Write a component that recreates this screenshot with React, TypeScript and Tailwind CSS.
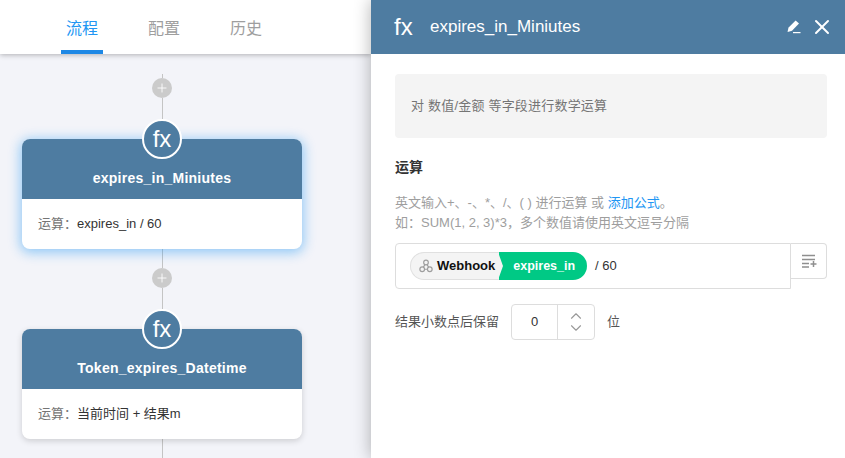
import { ChevronDown, ChevronUp, Plus, X } from "lucide-react";

const fontStack = "font-['Liberation_Sans','Noto_Sans_CJK_SC',sans-serif]";

function Connector({ height }: { height: string }) {
  return <div className={`w-px bg-[#c4c4c4] ${height}`} />;
}

function AddButton() {
  return (
    <div className="flex w-5 h-5 items-center justify-center rounded-full bg-[#cbcbcb] text-white">
      <Plus size={14} strokeWidth={1.5} />
    </div>
  );
}

function FlowCard({ title, children, active }: { title: string; children: React.ReactNode; active?: boolean }) {
  return (
    <div className="relative w-[280px]">
      <div className="absolute left-1/2 -top-5 z-10 flex w-10 h-10 -translate-x-1/2 items-center justify-center rounded-full border-2 border-white bg-[#4e7ca1] text-[24px] text-white">
        fx
      </div>
      <div
        className={`overflow-hidden rounded-lg bg-white ${
          active ? "shadow-[0_2px_12px_2px_rgba(33,150,243,0.45)]" : "shadow-[0_2px_6px_rgba(0,0,0,0.16)]"
        }`}
      >
        <div className="flex h-[60px] items-end justify-center bg-[#4e7ca1] pb-[10px] text-[14px] font-bold tracking-[0.25px] text-white">
          {title}
        </div>
        <div className="flex h-[50px] items-center px-4 text-[13px] text-[#333]">{children}</div>
      </div>
    </div>
  );
}

function FlowPane() {
  return (
    <div className="flex w-[371px] shrink-0 flex-col bg-[#f3f4f9]">
      <div className="z-10 flex h-[54px] shrink-0 gap-10 bg-white pl-[61px] shadow-[0_1px_5px_rgba(0,0,0,0.28)]">
        <div className="flex h-full w-[42px] items-center justify-center border-b-4 border-[#1e88e5] pt-2 text-[16px] text-[#2196f3]">
          流程
        </div>
        <div className="flex h-full w-[42px] items-center justify-center pt-1 text-[16px] text-[#9e9e9e]">配置</div>
        <div className="flex h-full w-[42px] items-center justify-center pt-1 text-[16px] text-[#9e9e9e]">历史</div>
      </div>
      <div className="flex w-[324px] flex-col items-center pt-5">
        <Connector height="h-1" />
        <AddButton />
        <Connector height="h-[41px]" />
        <FlowCard title="expires_in_Miniutes" active>
          <span className="text-[#757575]">运算：</span>
          expires_in / 60
        </FlowCard>
        <Connector height="h-[19px]" />
        <AddButton />
        <Connector height="h-[41px]" />
        <FlowCard title="Token_expires_Datetime">
          <span className="text-[#757575]">运算：</span>
          当前时间 + 结果m
        </FlowCard>
        <Connector height="h-5" />
      </div>
    </div>
  );
}

function DetailPane() {
  return (
    <div className="z-20 flex w-[474px] shrink-0 flex-col bg-white shadow-[0_0_16px_rgba(0,0,0,0.3)]">
      <div className="flex h-[54px] shrink-0 items-center bg-[#4e7ca1] pl-[23px] pr-[11px] text-white">
        <span className="w-[36px] text-[24px]">fx</span>
        <span className="text-[17px]">expires_in_Miniutes</span>
        <svg className="ml-auto" width="16" height="16" viewBox="0 0 16 16" fill="white">
          <path d="M10.6 1.4 L14 4.4 L7 11.8 L2.6 13 L3.4 8.8 Z" />
          <rect x="8" y="13" width="7.5" height="1.2" />
        </svg>
        <X className="ml-[9px]" size={24} strokeWidth={2} />
      </div>
      <div className="flex flex-col pl-6 pr-[18px] pt-5">
        <div className="flex h-16 items-center rounded bg-[#f4f4f4] px-4 text-[13px] tracking-[0.2px] text-[#757575]">
          对 数值/金额 等字段进行数学运算
        </div>
        <div className="mt-5 text-[14px] font-bold leading-[18px] text-[#333]">运算</div>
        <div className="mt-[17px] text-[13px] leading-[20px] text-[#9e9e9e]">
          <div>
            英文输入+、-、*、/、( ) 进行运算 或 <span className="text-[#2196f3]">添加公式</span>。
          </div>
          <div>如：SUM(1, 2, 3)*3，多个数值请使用英文逗号分隔</div>
        </div>
        <div className="mt-[10px] flex items-start">
          <div className="flex h-[46px] w-[396px] items-center rounded-l border border-[#ddd] pl-[14px]">
            <div className="flex h-7 items-center rounded-l-full border border-r-0 border-[#e0e0e0] bg-[#f4f4f4] pl-2 pr-1">
              <svg width="14" height="14" viewBox="0 0 24 24" fill="none" stroke="#9e9e9e" strokeWidth="2">
                <circle cx="12" cy="6" r="4" />
                <circle cx="5.5" cy="17.5" r="4" />
                <circle cx="18.5" cy="17.5" r="4" />
                <path d="M10 10 7.5 14M14 10l2.5 4M9.5 17.5h5" />
              </svg>
              <span className="ml-1 text-[13px] font-bold text-[#111]">Webhook</span>
            </div>
            <div className="relative flex h-7 items-center rounded-r-full bg-[#00c985] pl-[14px] pr-3 text-[12.5px] font-bold text-white">
              <svg className="absolute -left-px top-0" width="6" height="28" viewBox="0 0 6 28">
                <path d="M0 0 L5 14 L0 28 Z" fill="#f4f4f4" />
              </svg>
              expires_in
            </div>
            <span className="ml-2 text-[13px] text-[#333]">/ 60</span>
          </div>
          <div className="flex h-9 w-9 items-center justify-center rounded-r border border-l-0 border-[#ddd]">
            <svg width="16" height="14" viewBox="0 0 16 14" fill="none" stroke="#8f8f8f" strokeWidth="1.5">
              <path d="M1 1.5h13M1 5.5h13M1 9.5h7M1 13h7M9.5 10h6M12.5 7v6" />
            </svg>
          </div>
        </div>
        <div className="mt-[15px] flex items-center text-[13px] text-[#555]">
          <span>结果小数点后保留</span>
          <div className="ml-3 flex h-9 w-[84px] rounded border border-[#ddd]">
            <div className="flex w-[46px] items-center justify-center border-r border-[#ddd] text-[13px] text-[#333]">
              0
            </div>
            <div className="flex flex-1 flex-col items-center justify-center text-[#999]">
              <ChevronUp size={18} strokeWidth={1.5} />
              <ChevronDown className="-mt-1.5" size={18} strokeWidth={1.5} />
            </div>
          </div>
          <span className="ml-3">位</span>
        </div>
      </div>
    </div>
  );
}

export default function App() {
  return (
    <div className={`flex h-[458px] w-[845px] overflow-hidden ${fontStack}`}>
      <FlowPane />
      <DetailPane />
    </div>
  );
}
